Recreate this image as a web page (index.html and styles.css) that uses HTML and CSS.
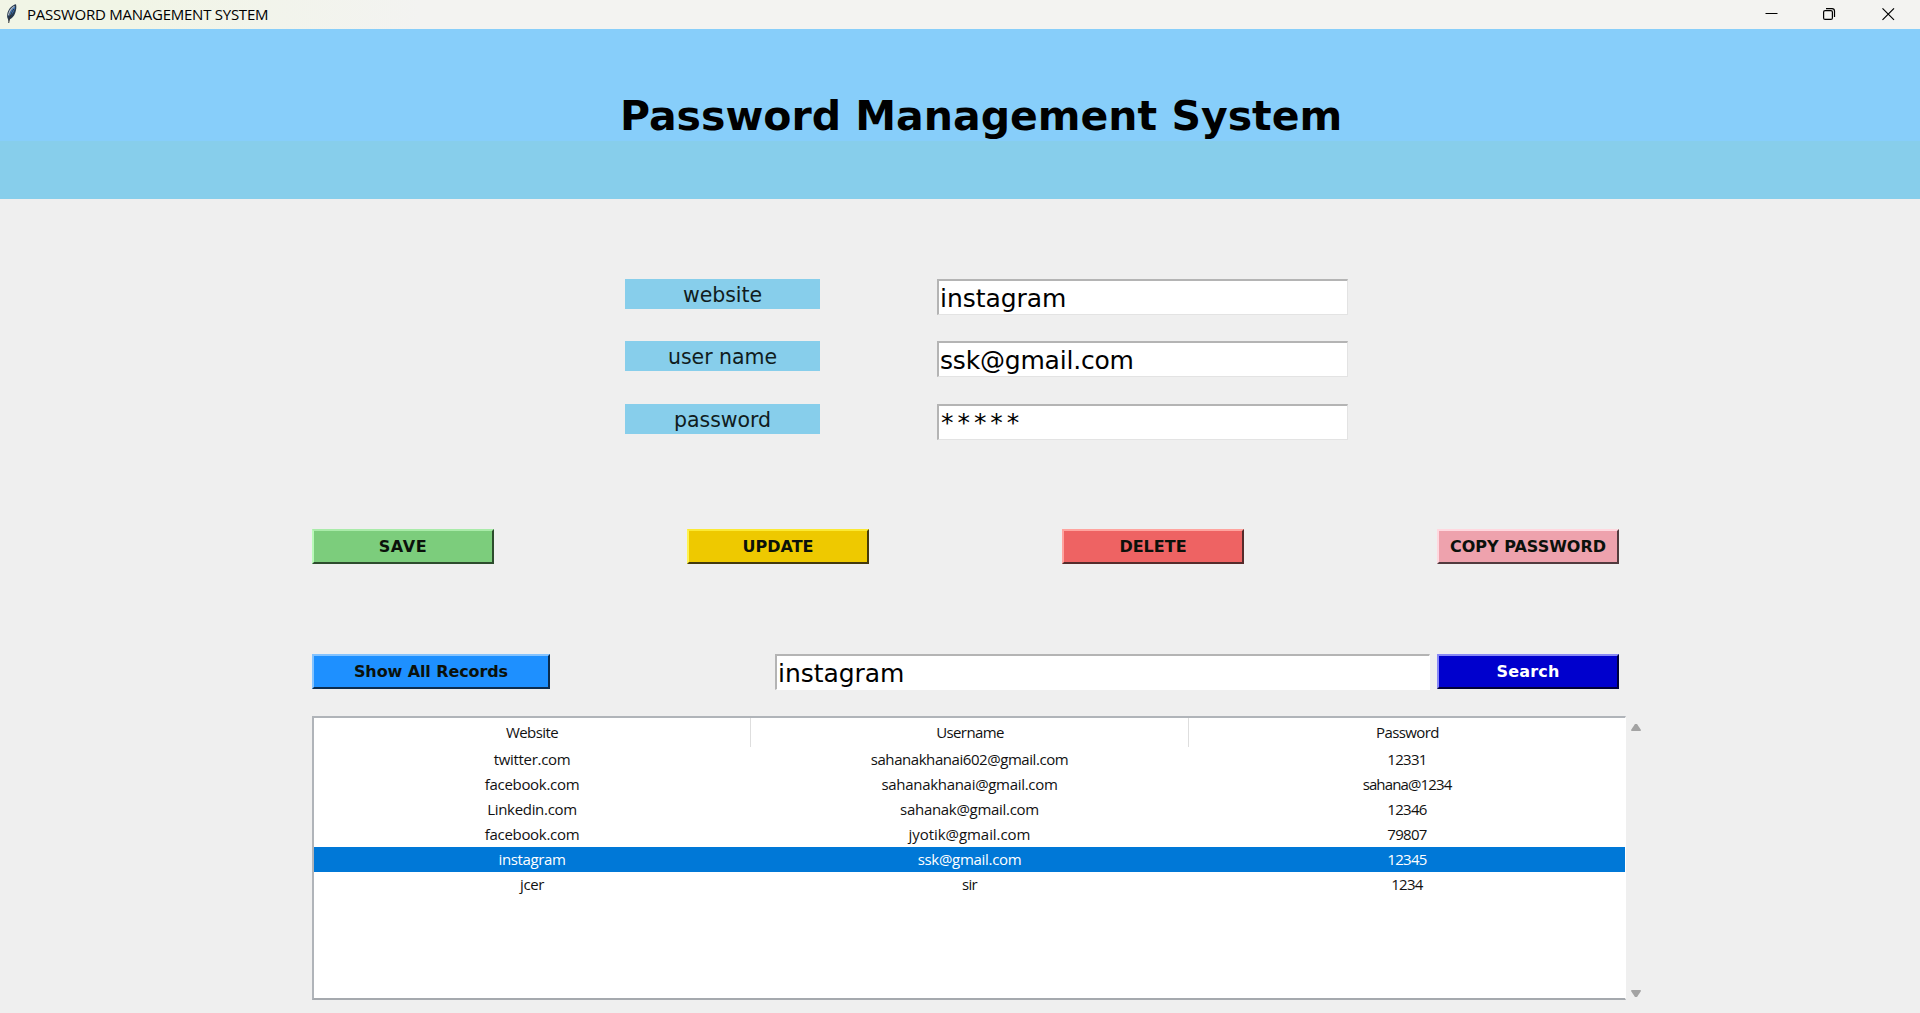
FILE: index.html
```
<!DOCTYPE html>
<html lang="en">
<head>
<meta charset="utf-8">
<title>PASSWORD MANAGEMENT SYSTEM</title>
<link rel="stylesheet" href="styles.css">
</head>
<body>
<div class="titlebar">
  <svg class="feather" width="14" height="22" viewBox="0 0 14 22">
    <path d="M11 1.2C7.6 1.800 4 5 2.600 9.500c-.8 2.600-.6 5 .3 6.600l.8 3 .8-2.600c2.400-.8 4.700-3.400 5.700-6.400C11.300 7 11.700 3.500 11 1.200z" fill="#26394f"/>
    <path d="M10.200 3.400C7.300 5 5.300 8 4.400 13c2.900-1.500 5.200-5 5.800-9.600z" fill="#3f80cf"/>
    <path d="M9.500 3.200C6.300 5 4.200 8.500 3.400 12.300" stroke="#b4bec9" stroke-width="1.300" fill="none"/>
    <path d="M8.800 6C6.500 9.500 4.500 13.500 3.700 20" stroke="#343434" fill="none"/>
  </svg>
  <span class="caption">PASSWORD MANAGEMENT SYSTEM</span>
  <div class="controls">
    <svg width="58" height="29" viewBox="0 0 58 29"><path d="M22.500 13.500h12" stroke="#000"/></svg>
    <svg width="58" height="29" viewBox="0 0 58 29" fill="none" stroke="#000" stroke-width="1.200"><rect x="22.600" y="10.600" width="8.800" height="8.800" rx="1.500"/><path d="M25 8.600h6a2.500 2.500 0 0 1 2.500 2.500v6"/></svg>
    <svg width="58" height="29" viewBox="0 0 58 29"><path d="M23.500 8.300l11.500 11.500M35 8.300L23.500 19.800" stroke="#000" stroke-width="1.200"/></svg>
  </div>
</div>
<header class="banner"><h1>Password Management System</h1></header>
<main>
  <form class="fields">
    <label for="website">website</label><div class="entry" id="website">instagram</div>
    <label for="user">user name</label><div class="entry email" id="user">ssk@gmail.com</div>
    <label for="pass">password</label><div class="entry masked" id="pass">*****</div>
  </form>
  <div class="actions">
    <button class="btn save">SAVE</button>
    <button class="btn update">UPDATE</button>
    <button class="btn delete">DELETE</button>
    <button class="btn copy">COPY PASSWORD</button>
  </div>
  <div class="search">
    <button class="btn show">Show All Records</button>
    <div class="entry query">instagram</div>
    <button class="btn find">Search</button>
  </div>
  <div class="records">
    <div class="tree">
      <div class="row head"><span>Website</span><span>Username</span><span>Password</span></div>
      <div class="row"><span>twitter.com</span><span class="long">sahanakhanai602@gmail.com</span><span class="num">12331</span></div>
      <div class="row"><span>facebook.com</span><span>sahanakhanai@gmail.com</span><span class="mixed">sahana@1234</span></div>
      <div class="row"><span>Linkedin.com</span><span>sahanak@gmail.com</span><span class="num">12346</span></div>
      <div class="row"><span>facebook.com</span><span class="loose">jyotik@gmail.com</span><span class="num">79807</span></div>
      <div class="row selected"><span class="tight">instagram</span><span>ssk@gmail.com</span><span class="num">12345</span></div>
      <div class="row"><span class="tight">jcer</span><span class="num">sir</span><span class="num">1234</span></div>
    </div>
    <div class="scrollbar">
      <svg width="12" height="9" viewBox="0 0 12 9"><path d="M5 1h2l4 6-.5 1h-9L1 7z" fill="#a3a3a3"/></svg>
      <svg width="12" height="9" viewBox="0 0 12 9"><path d="M5 8h2l4-6-.5-1h-9L1 2z" fill="#a3a3a3"/></svg>
    </div>
  </div>
</main>
</body>
</html>
```
FILE: styles.css
```
* { box-sizing: border-box; }

body {
  margin: 0;
  width: 1920px;
  height: 1013px;
  overflow: hidden;
  background: #efefef;
  color: #000;
  font-family: "DejaVu Sans", sans-serif;
}

.titlebar {
  display: flex;
  height: 29px;
  padding: 0 3px 0 5px;
  background: linear-gradient(90deg, #f1f5e6 0, #f1f5e6 130px, #f3f3f1 420px);
}
.feather { margin: 3px 8px 0 0; }
.caption {
  font: 15px/29px "Open Sans", sans-serif;
  letter-spacing: -0.25px;
}
.controls { display: flex; margin-left: auto; }
.controls svg { display: block; }

.banner {
  height: 170px;
  padding: 57px 0 0 620px;
  background: linear-gradient(#87cefa 112px, #87ceeb 112px);
}
h1 {
  margin: 0;
  font-size: 41px;
  line-height: 61px;
  white-space: nowrap;
}

main { padding: 80px 0 0 312px; }

.fields {
  display: grid;
  grid-template-columns: 195px 411px;
  grid-template-rows: 62px 63px 62px;
  column-gap: 117px;
  height: 250px;
  padding-left: 313px;
}
.fields label {
  height: 30px;
  background: #87ceeb;
  color: #101c20;
  font-size: 20.5px;
  line-height: 32px;
  letter-spacing: -0.05px;
  text-align: center;
}
.entry {
  height: 36px;
  padding: 0 1px;
  border: 1px solid #e3e3e3;
  border-top: 2px solid #b4b4b4;
  border-left: 2px solid #b4b4b4;
  background: #fff;
  font-size: 25px;
  line-height: 36px;
  letter-spacing: -0.05px;
}
.email { letter-spacing: -0.2px; }
.masked { padding-left: 2px; letter-spacing: 3.95px; line-height: 34px; }

.btn {
  display: block;
  width: 182px;
  height: 35px;
  padding: 1px 0 0;
  border: 2px solid;
  font: bold 16px/30px "DejaVu Sans", sans-serif;
  color: #0b110b;
  white-space: nowrap;
}
.actions {
  display: flex;
  gap: 193px;
  height: 125px;
}
.save { background: #7ccd7c; border-color: #a9eba9 #2d4c2d #2d4c2d #b9f9b9; letter-spacing: 0.6px; }
.update { background: #eec900; border-color: #fbe934 #443a0c #443a0c #fff34f; }
.delete { background: #ee6363; border-color: #ffa49f #552b2b #552b2b #ffa49f; }
.copy { background: #eea2ad; border-color: #ffd8df #513a3e #513a3e #ffd8df; }

.search {
  display: flex;
  height: 62px;
}
.show { width: 238px; background: #1e90ff; border-color: #83c3ff #0b2c4e #0b2c4e #83c3ff; letter-spacing: -0.1px; }
.query {
  width: 655px;
  margin: 0 7px 0 225px;
  border-right-color: #fff;
  border-bottom-color: #fff;
}
.find { background: #0000cd; border-color: #8989f5 #00003a #00003a #8989f5; color: #fff; letter-spacing: 0.2px; }

.records { display: flex; }
.tree {
  width: 1314px;
  height: 284px;
  border: 1px solid #fff;
  border-width: 2px 1px 2px 2px;
  border-color: #b0b4b9 #fff #a5a9ae #b0b4b9;
  background: #fff;
  font: 15px/24px "Open Sans", sans-serif;
  letter-spacing: -0.3px;
}
.row {
  display: grid;
  grid-template-columns: 436px 438px 437px;
  height: 25px;
  color: #111;
  text-align: center;
}
.row span + span { padding-left: 1px; }
.head {
  height: 29px;
  line-height: 28px;
  letter-spacing: -0.6px;
}
.head span + span { border-left: 1px solid #dedede; }
.selected { background: #0078d7; color: #fff; }
.long { letter-spacing: -0.44px; }
.tight { letter-spacing: -0.37px; }
.loose { letter-spacing: -0.06px; }
.num { letter-spacing: -0.7px; }
.mixed { letter-spacing: -0.87px; }

.scrollbar {
  display: flex;
  flex-direction: column;
  justify-content: space-between;
  height: 284px;
  padding: 7px 0 2px 4px;
}
```
